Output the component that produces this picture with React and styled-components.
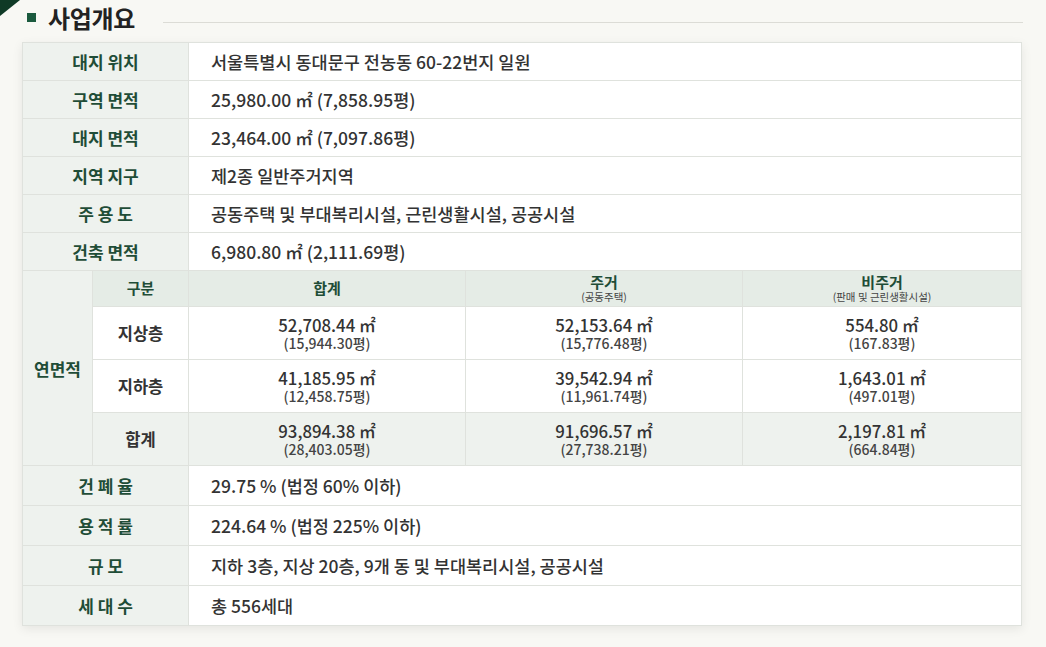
import styled, { createGlobalStyle } from "styled-components";

const GlobalStyle = createGlobalStyle`
  html, body {
    margin: 0;
    padding: 0;
    background: #f8f8f4;
  }
  body {
    font-family: "Noto Sans CJK KR", "Noto Sans", sans-serif;
    color: #333;
  }
`;

const Page = styled.div`
  position: relative;
  width: 1046px;
  height: 647px;
  overflow: hidden;
  padding: 2px 0 0 22px;
  box-sizing: border-box;
`;

const Corner = styled.svg`
  position: absolute;
  left: 0;
  top: 0;
`;

const TitleRow = styled.div`
  display: flex;
  align-items: center;
  height: 30px;
  margin-bottom: 10px;
`;

const Marker = styled.span`
  width: 9px;
  height: 9px;
  background: #1b5a3e;
  margin: 1px 12px 0 5px;
`;

const Title = styled.h2`
  margin: 0;
  font-size: 24px;
  font-weight: 700;
  color: #222;
  letter-spacing: -0.3px;
`;

const Rule = styled.div`
  flex: 1;
  height: 1px;
  background: #dcdcd6;
  margin: 10px 23px 0 28px;
`;

const Table = styled.table`
  width: 999px;
  border-collapse: collapse;
  table-layout: fixed;
  background: #fff;
  box-shadow: 0 3px 10px rgba(0, 0, 0, 0.08);
  td, th {
    border: 1px solid #dfe2dd;
    padding: 0;
  }
`;

const Label = styled.th`
  height: ${(p) => p.$h || 37}px;
  background: #eef2ee;
  color: #1f4d37;
  font-size: 17px;
  font-weight: 700;
  text-align: center;
  white-space: pre;
`;

const Value = styled.td`
  height: ${(p) => p.$h || 37}px;
  padding-left: 22px !important;
  font-size: 17.5px;
  font-weight: 500;
  color: #333;
  text-align: left;
`;

const Head = styled.th`
  height: 35px;
  background: #e5ece6;
  color: #1f4d37;
  font-size: 15px;
  font-weight: 700;
  text-align: center;
  line-height: 1.1;
`;

const HeadSub = styled.div`
  font-size: 10.5px;
  font-weight: 400;
  color: #444;
  margin-top: 1px;
`;

const SubLabel = styled.th`
  height: 52px;
  background: ${(p) => (p.$tint ? "#eef2ee" : "#fff")};
  color: #333;
  font-size: 16.5px;
  font-weight: 700;
  text-align: center;
`;

const Area = styled.td`
  height: 52px;
  background: ${(p) => (p.$tint ? "#eef2ee" : "#fff")};
  text-align: center;
`;

const AreaMain = styled.div`
  font-size: 16.8px;
  line-height: 20px;
  font-weight: 500;
  color: #333;
`;

const AreaSub = styled.div`
  font-size: 14px;
  line-height: 17px;
  font-weight: 500;
  color: #444;
`;

const topRows = [
  ["대지 위치", "서울특별시 동대문구 전농동 60-22번지 일원"],
  ["구역 면적", "25,980.00 ㎡ (7,858.95평)"],
  ["대지 면적", "23,464.00 ㎡ (7,097.86평)"],
  ["지역 지구", "제2종 일반주거지역"],
  ["주 용 도", "공동주택 및 부대복리시설, 근린생활시설, 공공시설"],
  ["건축 면적", "6,980.80 ㎡ (2,111.69평)"],
];

const areaRows = [
  {
    name: "지상층",
    cells: [
      ["52,708.44 ㎡", "(15,944.30평)"],
      ["52,153.64 ㎡", "(15,776.48평)"],
      ["554.80 ㎡", "(167.83평)"],
    ],
  },
  {
    name: "지하층",
    cells: [
      ["41,185.95 ㎡", "(12,458.75평)"],
      ["39,542.94 ㎡", "(11,961.74평)"],
      ["1,643.01 ㎡", "(497.01평)"],
    ],
  },
  {
    name: "합계",
    tint: true,
    cells: [
      ["93,894.38 ㎡", "(28,403.05평)"],
      ["91,696.57 ㎡", "(27,738.21평)"],
      ["2,197.81 ㎡", "(664.84평)"],
    ],
  },
];

const bottomRows = [
  ["건 폐 율", "29.75 % (법정 60% 이하)"],
  ["용 적 률", "224.64 % (법정 225% 이하)"],
  ["규 모", "지하 3층, 지상 20층, 9개 동 및 부대복리시설, 공공시설"],
  ["세 대 수", "총 556세대"],
];

export default function App() {
  return (
    <>
      <GlobalStyle />
      <Page>
        <Corner width="24" height="20" viewBox="0 0 24 20">
          <path d="M0 0 H20 L0 16 Z" fill="#0f3a26" />
        </Corner>
        <TitleRow>
          <Marker />
          <Title>사업개요</Title>
          <Rule />
        </TitleRow>
        <Table>
          <colgroup>
            <col style={{ width: 70 }} />
            <col style={{ width: 96 }} />
            <col style={{ width: 277 }} />
            <col style={{ width: 277 }} />
            <col style={{ width: 279 }} />
          </colgroup>
          <tbody>
            {topRows.map(([k, v]) => (
              <tr key={k}>
                <Label colSpan={2}>{k}</Label>
                <Value colSpan={3}>{v}</Value>
              </tr>
            ))}
            <tr>
              <Label rowSpan={4}>연면적</Label>
              <Head>구분</Head>
              <Head>합계</Head>
              <Head>
                주거
                <HeadSub>(공동주택)</HeadSub>
              </Head>
              <Head>
                비주거
                <HeadSub>(판매 및 근린생활시설)</HeadSub>
              </Head>
            </tr>
            {areaRows.map((r) => (
              <tr key={r.name}>
                <SubLabel $tint={r.tint}>{r.name}</SubLabel>
                {r.cells.map(([m, s]) => (
                  <Area key={m} $tint={r.tint}>
                    <AreaMain>{m}</AreaMain>
                    <AreaSub>{s}</AreaSub>
                  </Area>
                ))}
              </tr>
            ))}
            {bottomRows.map(([k, v]) => (
              <tr key={k}>
                <Label colSpan={2} $h={39}>
                  {k}
                </Label>
                <Value colSpan={3} $h={39}>
                  {v}
                </Value>
              </tr>
            ))}
          </tbody>
        </Table>
      </Page>
    </>
  );
}
